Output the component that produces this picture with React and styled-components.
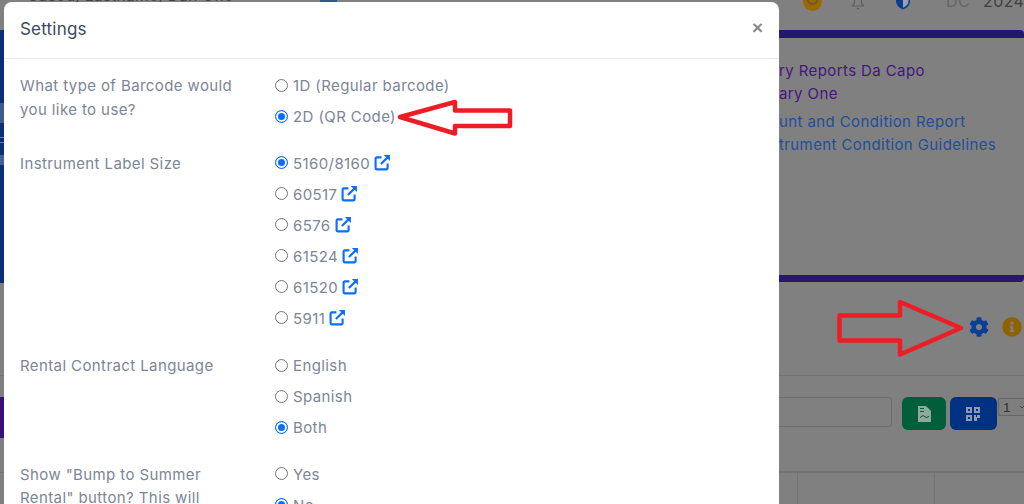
import React from "react";
import styled, { createGlobalStyle } from "styled-components";

const Global = createGlobalStyle`
  html, body { margin: 0; padding: 0; height: 504px; overflow: hidden; background: #808080; }
  * { box-sizing: border-box; }
`;

const font = `Inter, "Noto Sans", "Liberation Sans", sans-serif`;

const Page = styled.div`
  position: relative;
  width: 1024px;
  height: 504px;
  overflow: hidden;
  background: #808080;
  font-family: ${font};
`;

/* ---------- dimmed page behind the dialog ---------- */
const Backdrop = styled.div`
  width: 1024px;
  height: 504px;
  display: flex;
  flex-direction: column;
  padding-left: 779px;
  color: #3f4347;
`;
const TopBar = styled.div`
  height: 30px;
  margin-left: -779px;
  display: flex;
  align-items: flex-start;
  overflow: hidden;
`;
const TopLeft = styled.div`
  flex: 0 0 779px;
  display: grid;
  grid-template-columns: 293px 17px;
  padding-left: 27px;
`;
const PatientName = styled.span`
  margin-top: -13px;
  font-size: 15.5px;
  line-height: 18px;
  letter-spacing: 0.3px;
  white-space: nowrap;
  color: #3f4347;
`;
const TopLink = styled.span`
  height: 3px;
  background: #2a5a9a;
`;
const TopIcon = styled.svg`
  margin-top: ${(p) => p.$top}px;
  margin-left: ${(p) => p.$left}px;
  flex: none;
`;
const TopText = styled.span`
  margin-left: ${(p) => p.$left}px;
  margin-top: -8px;
  font-size: 16px;
  line-height: 18px;
  white-space: nowrap;
  color: ${(p) => p.$color};
  letter-spacing: 0.4px;
`;
const Card = styled.div`
  height: 252px;
  border-top: 8px solid #1f1a70;
  border-bottom: 7px solid #2a1570;
  border-top-right-radius: 4px;
  border-bottom-right-radius: 4px;
  padding-top: 21px;
  overflow: hidden;
`;
const CardLine = styled.div`
  font-size: 15px;
  letter-spacing: 0.4px;
  line-height: 23px;
  white-space: nowrap;
  margin-bottom: ${(p) => p.$gap || 0}px;
  color: ${(p) => p.$color};
`;
const Tools = styled.div`
  height: 94px;
  border-bottom: 1px solid #737373;
  display: flex;
  justify-content: flex-end;
  align-items: flex-start;
  gap: 13px;
  padding: 35px 2px 0 0;
`;
const ActionRow = styled.div`
  height: 97px;
  border-bottom: 2px solid #737373;
  display: flex;
  align-items: flex-start;
  padding-top: 21px;
`;
const SearchBox = styled.div`
  width: 113px;
  height: 30px;
  border: 1px solid #6e6e6e;
  border-left: none;
  border-radius: 0 4px 4px 0;
  margin-right: 10px;
`;
const ActionButton = styled.div`
  height: 33px;
  width: ${(p) => p.$w}px;
  margin-right: ${(p) => p.$mr}px;
  border-radius: 6px;
  background: ${(p) => p.$bg};
  display: flex;
  align-items: center;
  justify-content: center;
`;
const PagerSelect = styled.div`
  width: 26px;
  height: 18px;
  margin: 1px 0 0 1px;
  border: 1px solid #666;
  border-right: none;
  border-radius: 2px 0 0 2px;
  font-family: "Liberation Sans", sans-serif;
  font-size: 13.5px;
  line-height: 15px;
  padding-left: 4px;
  color: #333;
  background: #7e7e7e;
  display: flex;
  justify-content: space-between;
  align-items: center;
`;
const TableRow = styled.div`
  flex: 1;
  display: flex;
  padding-left: 18px;
`;
const TableCell = styled.div`
  width: ${(p) => p.$w}px;
  border-left: 1px solid #737373;
`;

/* ---------- left sliver of the page ---------- */
const Sliver = styled.div`
  position: absolute;
  left: 0;
  width: 4px;
  top: ${(p) => p.$top}px;
  height: ${(p) => p.$h}px;
  background: ${(p) => p.$bg};
`;

/* ---------- dialog ---------- */
const Dialog = styled.div`
  position: absolute;
  left: 4px;
  top: 2px;
  width: 775px;
  height: 520px;
  background: #fff;
  border-radius: 8px 8px 0 0;
  font-family: ${font};
`;
const Header = styled.div`
  height: 57px;
  border-bottom: 1px solid #e8ebf1;
  display: flex;
  align-items: center;
  justify-content: space-between;
  padding: 0 16px;
`;
const Title = styled.h5`
  margin: -2px 0 0;
  font-size: 17px;
  letter-spacing: 0.2px;
  font-weight: 400;
  line-height: 20px;
  color: #3a4a5e;
`;
const Close = styled.span`
  font-size: 19px;
  line-height: 20px;
  font-family: "Liberation Sans", sans-serif;
  font-weight: 700;
  color: #8a8a8a;
  margin: -4px 0 0;
`;
const Body = styled.div`
  padding: 15px 16px 0;
`;
const SettingRow = styled.div`
  display: grid;
  grid-template-columns: 255px 1fr;
  margin-bottom: ${(p) => p.$gap}px;
`;
const Question = styled.div`
  font-size: 15px;
  letter-spacing: 0.4px;
  line-height: 23.5px;
  color: #7b8698;
  width: 225px;
`;
const Options = styled.div`
  display: flex;
  flex-direction: column;
  gap: 7.5px;
`;
const Option = styled.label`
  display: flex;
  align-items: center;
  height: 23.5px;
  font-size: 15px;
  letter-spacing: 0.4px;
  color: #7b8698;
  white-space: nowrap;
`;
const Radio = styled.span`
  width: 13px;
  height: 13px;
  margin-right: 5px;
  margin-top: -1px;
  border-radius: 50%;
  flex: none;
  background: ${(p) => (p.$on ? "#0b6cff" : "#fff")};
  border: 1px solid ${(p) => (p.$on ? "#0b6cff" : "#767676")};
  box-shadow: ${(p) => (p.$on ? "inset 0 0 0 2px #fff" : "none")};
`;
const External = styled.svg`
  margin-left: 4px;
  margin-top: -1px;
  flex: none;
`;

const ExternalIcon = () => (
  <External width="17" height="17" viewBox="0 0 16 16" fill="none" stroke="#0d6efd" strokeWidth="2">
    <path d="M7 3.2H2.5a1 1 0 0 0-1 1v9.3a1 1 0 0 0 1 1h9.3a1 1 0 0 0 1-1V9" />
    <path d="M6.5 9.5 14 2" />
    <path d="M9.3 1h5.7v5.7z" fill="#0d6efd" stroke="none" />
  </External>
);

const sizes = ["5160/8160", "60517", "6576", "61524", "61520", "5911"];

const Arrow = styled.svg`
  position: absolute;
  left: ${(p) => p.$x}px;
  top: ${(p) => p.$y}px;
  overflow: visible;
`;

export default function App() {
  return (
    <Page>
      <Global />
      <Backdrop>
        <TopBar>
          <TopLeft>
            <PatientName>Cased, Lastname, Dan One</PatientName>
            <TopLink />
          </TopLeft>
          <TopIcon $left={23} $top={-9} width="21" height="21" viewBox="0 0 21 21">
            <circle cx="10.5" cy="10.5" r="9.5" fill="#9a6a00" />
            <circle cx="10.5" cy="8" r="5" fill="none" stroke="#6b5a30" strokeWidth="2" />
          </TopIcon>
          <TopIcon $left={28} $top={-2} width="14" height="12" viewBox="0 0 14 12" fill="none" stroke="#5e5e5e" strokeWidth="1.2">
            <path d="M3.5 0V4C3.5 6 2 7 1.5 8h11C12 7 10.5 6 10.5 4V0" />
            <path d="M6 10.5h2" strokeWidth="1.5" />
          </TopIcon>
          <TopIcon $left={30} $top={-5} width="16" height="15" viewBox="0 0 16 15">
            <path d="M1 0h14v6c0 4-3 7-7 8.500C4 13 1 10 1 6z" fill="#0a3d8f" />
            <path d="M8 0h5.500v6c0 3-2.500 5.500-5.500 6.800z" fill="#9aa0aa" />
          </TopIcon>
          <TopText $left={35} $color="#666">DC</TopText>
          <TopText $left={13} $color="#3f3f3f">2024-</TopText>
        </TopBar>
        <Card>
          <CardLine $color="#451680">ry Reports Da Capo</CardLine>
          <CardLine $color="#451680" $gap={5}>ary One</CardLine>
          <CardLine $color="#1f4e9a">unt and Condition Report</CardLine>
          <CardLine $color="#1f4e9a">trument Condition Guidelines</CardLine>
        </Card>
        <Tools>
          <svg width="20" height="20" viewBox="0 0 512 512">
            <path fill="#0a3f96" d="M487.4 315.7l-42.6-24.6c4.3-23.2 4.3-47 0-70.2l42.6-24.6c4.9-2.8 7.1-8.6 5.5-14-11.1-35.6-30-67.8-54.7-94.6-3.8-4.1-10-5.1-14.8-2.3L380.8 110c-17.9-15.4-38.5-27.3-60.8-35.1V25.8c0-5.6-3.9-10.5-9.4-11.7-36.7-8.2-74.3-7.8-109.2 0-5.5 1.2-9.4 6.1-9.4 11.7V75c-22.2 7.9-42.8 19.8-60.8 35.1L88.7 85.5c-4.9-2.8-11-1.9-14.8 2.3-24.7 26.7-43.6 58.9-54.7 94.6-1.7 5.4.6 11.2 5.5 14L67.3 221c-4.3 23.2-4.3 47 0 70.2l-42.6 24.6c-4.9 2.8-7.1 8.6-5.5 14 11.1 35.6 30 67.8 54.7 94.6 3.8 4.1 10 5.1 14.8 2.3l42.6-24.6c17.9 15.4 38.5 27.3 60.8 35.1v49.2c0 5.6 3.9 10.5 9.4 11.7 36.7 8.2 74.3 7.8 109.2 0 5.5-1.2 9.4-6.1 9.4-11.7v-49.2c22.2-7.9 42.8-19.8 60.8-35.1l42.6 24.6c4.9 2.8 11 1.9 14.8-2.3 24.7-26.7 43.6-58.9 54.7-94.6 1.5-5.5-.7-11.3-5.6-14.1zM256 336c-44.1 0-80-35.9-80-80s35.9-80 80-80 80 35.9 80 80-35.9 80-80 80z" />
          </svg>
          <svg width="20" height="20" viewBox="0 0 512 512">
            <path fill="#8f6200" d="M256 8C119 8 8 119 8 256s111 248 248 248 248-111 248-248S393 8 256 8zm0 110c23.200 0 42 18.800 42 42s-18.800 42-42 42-42-18.800-42-42 18.800-42 42-42zm56 254c0 6.600-5.400 12-12 12h-88c-6.600 0-12-5.400-12-12v-24c0-6.600 5.400-12 12-12h12v-64h-12c-6.600 0-12-5.400-12-12v-24c0-6.600 5.400-12 12-12h64c6.600 0 12 5.400 12 12v100h12c6.600 0 12 5.400 12 12v24z" />
          </svg>
        </Tools>
        <ActionRow>
          <SearchBox />
          <ActionButton $w={44} $mr={4} $bg="#005f3a">
            <svg width="13" height="16" viewBox="0 0 13 16">
              <path fill="#8fa99a" d="M0 0h8l5 5v11H0z" />
              <path fill="#005f3a" d="M2 2h4v1H2zM2 5h4v1H2zM2 11l3-2 3 2 3-1v1l-3 1-3-2-3 2z" />
            </svg>
          </ActionButton>
          <ActionButton $w={47} $mr={0} $bg="#003182">
            <svg width="15" height="14" viewBox="0 0 15 14" fill="#8d9ab0">
              <path fillRule="evenodd" d="M0 0h6v6H0zM2 2v2h2V2zM8 0h6v6H8zM10 2v2h2V2zM0 8h6v6H0zM2 10v2h2v-2zM8 8h2v2h1V8h3v3h-3v3H8z" />
            </svg>
          </ActionButton>
          <PagerSelect>
            1
            <svg width="4" height="4" viewBox="0 0 4 4" fill="none" stroke="#444" strokeWidth="1">
              <path d="M0 1l2 2 2-2" />
            </svg>
          </PagerSelect>
        </ActionRow>
        <TableRow>
          <TableCell $w={137} />
          <TableCell $w={90} />
        </TableRow>
      </Backdrop>

      <Sliver $top={30} $h={253} $bg="#0a2f78" />
      <Sliver $top={103} $h={20} $bg="#3f5a8c" />
      <Sliver $top={137} $h={1} $bg="#6a7fa8" />
      <Sliver $top={142} $h={1} $bg="#6a7fa8" />
      <Sliver $top={155} $h={10} $bg="#46608f" />
      <Sliver $top={375} $h={1} $bg="#737373" />
      <Sliver $top={397} $h={41} $bg="#3a0f78" />
      <Sliver $top={472} $h={1} $bg="#737373" />

      <Dialog>
        <Header>
          <Title>Settings</Title>
          <Close>×</Close>
        </Header>
        <Body>
          <SettingRow $gap={23}>
            <Question>What type of Barcode would you like to use?</Question>
            <Options>
              <Option><Radio />1D (Regular barcode)</Option>
              <Option><Radio $on />2D (QR Code)</Option>
            </Options>
          </SettingRow>
          <SettingRow $gap={24}>
            <Question>Instrument Label Size</Question>
            <Options>
              {sizes.map((s, i) => (
                <Option key={s}>
                  <Radio $on={i === 0} />
                  {s}
                  <ExternalIcon />
                </Option>
              ))}
            </Options>
          </SettingRow>
          <SettingRow $gap={23}>
            <Question>Rental Contract Language</Question>
            <Options>
              <Option><Radio />English</Option>
              <Option><Radio />Spanish</Option>
              <Option><Radio $on />Both</Option>
            </Options>
          </SettingRow>
          <SettingRow $gap={0}>
            <Question>Show "Bump to Summer Rental" button? This will</Question>
            <Options>
              <Option><Radio />Yes</Option>
              <Option><Radio $on />No</Option>
            </Options>
          </SettingRow>
        </Body>
      </Dialog>

      <Arrow $x={0} $y={0} width="1024" height="504" viewBox="0 0 1024 504" fill="none" stroke="#ee1c25" strokeWidth="4.500" strokeLinejoin="round">
        <path d="M400 117 L455 102 V110.500 H510 V126 H455 V133.500 Z" />
        <path d="M839.500 315.500 H900 V302 L961 328 L900 354.500 V340.500 H839.500 Z" />
      </Arrow>
    </Page>
  );
}
